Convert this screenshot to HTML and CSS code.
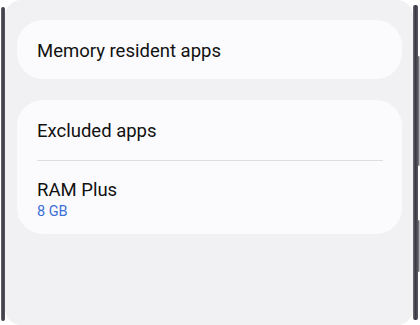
FILE: index.html
```html
<!DOCTYPE html>
<html>
<head>
<meta charset="utf-8">
<link rel="stylesheet" href="styles.css">
</head>
<body>
<div class="device">
  <div class="bezel bezel-left"></div>
  <div class="screen">
    <div class="card single">
      <div class="row"><span class="title">Memory resident apps</span></div>
    </div>
    <div class="card">
      <div class="row"><span class="title">Excluded apps</span></div>
      <div class="divider"></div>
      <div class="row two">
        <span class="title">RAM Plus</span>
        <span class="sub">8 GB</span>
      </div>
    </div>
  </div>
  <div class="bezel-right-wrap">
    <div class="bezel bezel-right"></div>
    <div class="buttons">
      <div class="btn btn-1"></div>
      <div class="btn btn-2"></div>
    </div>
  </div>
</div>
</body>
</html>
```
FILE: styles.css
```css
html, body {
  margin: 0;
  padding: 0;
  background: #ffffff;
  width: 420px;
  height: 325px;
  overflow: hidden;
}
.device {
  display: flex;
  height: 325px;
  width: 420px;
}
.bezel {
  width: 4px;
  background: linear-gradient(to right, #6e6c78, #3a3942 50%, #5b5a66);
  border-radius: 2px;
}
.bezel-left {
  margin: 7px 0 4px 1px;
}
.screen {
  flex: 1;
  background: #f1f1f3;
  border-radius: 16px;
  padding: 20px 11px 0 12px;
  display: flex;
  flex-direction: column;
  gap: 21px;
}
.bezel-right-wrap {
  display: flex;
  width: 7px;
}
.bezel-right {
  width: 5px;
  margin: 5px 0 5px 0;
}
.buttons {
  width: 2px;
  display: flex;
  flex-direction: column;
}
.btn {
  background: linear-gradient(to right, #4a4952, #d8d8dc);
  border-radius: 1px;
}
.btn-1 { margin-top: 56px; height: 110px; }
.btn-2 { margin-top: 54px; height: 52px; }
.card {
  background: #fbfbfd;
  border-radius: 26px;
  padding: 0 19px 0 20px;
  font-family: Roboto, "Liberation Sans", sans-serif;
  color: #111111;
}
.row {
  display: flex;
  flex-direction: column;
  justify-content: center;
  height: 60px;
  padding-top: 2px;
  box-sizing: border-box;
}
.single .row { height: 59px; }
.row.two {
  height: 73px;
  justify-content: flex-start;
  padding-top: 18px;
}
.title {
  font-size: 18.5px;
  line-height: 22px;
}
.sub {
  font-size: 14.5px;
  line-height: 18px;
  color: #3d6fd6;
  margin-top: 2px;
}
.divider {
  height: 1px;
  background: #dedee2;
}
```
